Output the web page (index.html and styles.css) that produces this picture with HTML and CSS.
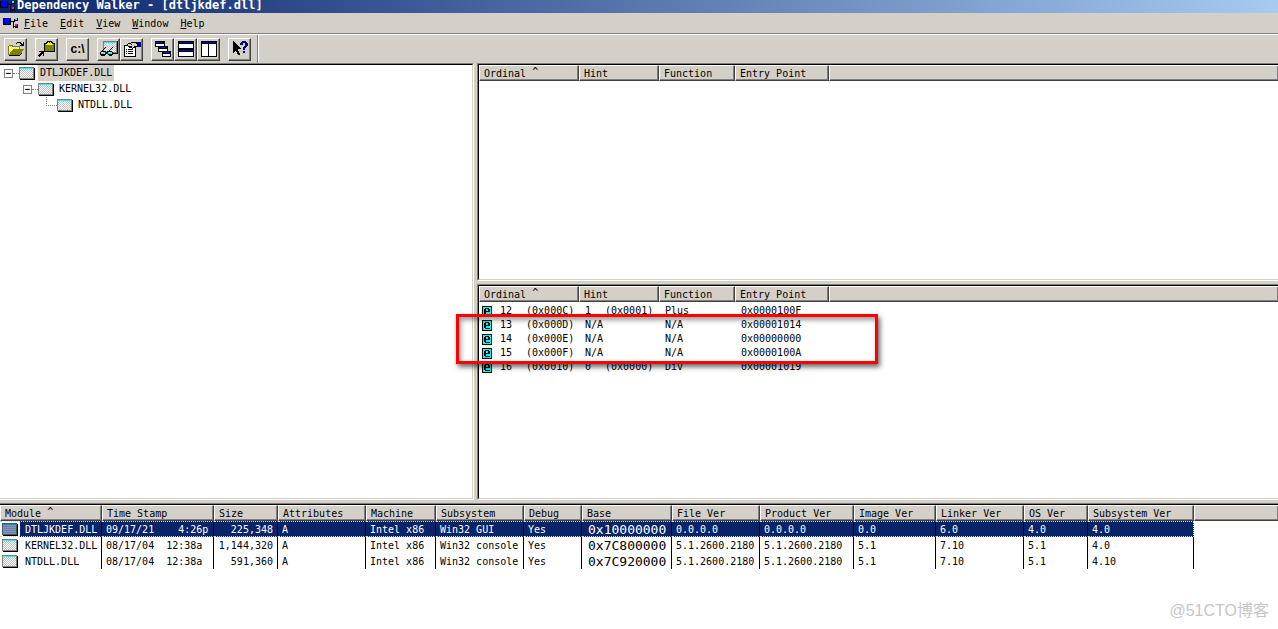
FILE: index.html
```html
<!DOCTYPE html>
<html lang="en">
<head>
<meta charset="utf-8">
<title>Dependency Walker - [dtljkdef.dll]</title>
<link rel="stylesheet" href="styles.css">
</head>
<body>
<svg class="defs" aria-hidden="true">
  <defs>
    <pattern id="check" width="2" height="2" patternUnits="userSpaceOnUse">
      <rect width="2" height="2" fill="#fff"/><path d="M0 0h1v1H0zM1 1h1v1H1z" fill="#c0c0c0"/>
    </pattern>
    <pattern id="yellow-check" width="2" height="2" patternUnits="userSpaceOnUse">
      <rect width="2" height="2" fill="#fff"/><path d="M0 0h1v1H0zM1 1h1v1H1z" fill="#ff0"/>
    </pattern>
    <symbol id="module" viewBox="0 0 16 13">
      <path d="M1 1h15v12H1z" fill="#000"/><path d="M0 0h15v12H0z" fill="#808080"/>
      <path d="M1 1h13v1H1z" fill="#0ff"/><path d="M1 2h13v9H1z" fill="url(#check)"/>
    </symbol>
    <symbol id="module-selected" viewBox="0 0 16 13">
      <path d="M1 1h15v12H1z" fill="#000"/><path d="M0 0h15v12H0z" fill="#455575"/>
      <path d="M1 1h13v1H1z" fill="#0594b4"/><path d="M1 2h13v9H1z" fill="#8494b4"/>
      <path d="M1 3h13v1H1zM1 5h13v1H1zM1 7h13v1H1zM1 9h13v1H1z" fill="#6f80a4"/>
    </symbol>
    <symbol id="app" viewBox="0 0 16 13">
      <path d="M0 1h8v7H0z" fill="#000"/><path d="M1 1h6v6H1z" fill="#00f"/>
      <path d="M8 4h4v1H8zM10 5h1v6h-1zM11 9h2v1h-2zM11 2h1v3h-1zM12 1h3v3h-3zM12 7h3v4h-3z" fill="#000"/>
      <path d="M12 1h2v2h-2z" fill="#0ff"/><path d="M12 7h2v2h-2z" fill="#f0f"/>
    </symbol>
    <symbol id="export" viewBox="0 0 10 11">
      <path d="M0 0h10v11H0z" fill="#000"/><path d="M1 1h8v9H1z" fill="#0ff"/>
      <path d="M3 2h4v1H3zM2 3h2v5H2zM6 3h2v3H6zM4 5h2v1H4zM3 8h5v1H3z" fill="#000"/>
    </symbol>
  </defs>
</svg>

<header class="titlebar"><svg class="app-icon"><use href="#app"/></svg><h1>Dependency Walker - [dtljkdef.dll]</h1></header>

<nav class="menubar" aria-label="Menu">
  <svg class="app-icon" aria-hidden="true"><use href="#app"/></svg>
  <button><u>F</u>ile</button><button><u>E</u>dit</button><button><u>V</u>iew</button><button><u>W</u>indow</button><button><u>H</u>elp</button>
</nav>

<div class="toolbar" role="toolbar">
  <div class="group">
    <button aria-label="Open"><svg viewBox="0 0 18 16"><path d="M2 4h4v1h7v4H2z" fill="#808000"/><path d="M2 4h4v1H2zM1 5h1v9H1z" fill="#808000"/><path d="M2 5h3v1h7v3H5v1H4v2H3v2H2z" fill="url(#yellow-check)"/><path d="M6 8h11v1h-1v1h-1v2h-1v1h-1v1H2v-1h1v-2h1v-1h1V9h1z" fill="#808000"/><path d="M2 14h11v1H2zM13 13h1v1h-1zM14 12h1v1h-1z"/><path d="M10 1h4v1h1v1h1V1h1v4h-4V4h1V3h-1V2h-3v1H9V2h1z"/></svg></button>
  </div>
  <div class="group">
    <button aria-label="View module"><svg viewBox="0 0 18 16"><path d="M6 2h2V1h1V0h5v1h1v1h2v9H6z"/><path d="M7 3h9v7H7z" fill="#808000"/><path d="M8 3h1V2h1V1h3v1h1v1h1v1H8z" fill="#ff0"/><path d="M11 1h1v1h-1z"/><path d="M1 10h5v5H5v-2H4v1H3v1H2v1H1v-1H0v-1h1v-1h1v-1h1v-1H1z"/></svg></button>
  </div>
  <div class="group"><button class="path-button">c:\</button></div>
  <div class="group">
    <button aria-label="View functions"><svg viewBox="0 0 18 16"><path d="M4 0h14v13H4z"/><path d="M3 0h14v12H3z" fill="#808080"/><path d="M4 1h12v1H4z" fill="#0ff"/><path d="M4 2h12v9H4z" fill="url(#check)"/><path d="M5 6h1v1H5zM4 7h1v1H4zM3 8h1v1H3zM2 9h1v1H2zM12 6h1v1h-1zM11 7h1v1h-1zM10 8h1v1h-1zM9 9h1v1H9zM1 10h5v1h1v-1h5v1h1v3h-1v1H9v-1H8v-2H6v2H5v1H1v-1H0v-3h1z"/><path d="M1 11h4v2H1zM8 11h4v2H8z" fill="#0ff"/><path d="M2 11h1v1H2zM9 11h1v1H9zM4 12h1v1H4zM11 12h1v1h-1z" fill="#fff"/></svg></button><button aria-label="Properties"><svg viewBox="0 0 18 16"><path d="M1 4h12v12H1z"/><path d="M2 5h10v10H2z" fill="#fff"/><path d="M3 8h1v1H3zM5 8h5v1H5zM3 10h1v1H3zM5 10h5v1H5zM3 12h1v1H3zM5 12h5v1H5z"/><path d="M5 2h3V1h6v1h1v4h-3v1h-2v1H9V7H6V6H5V5H4V3h1z"/><path d="M5 3h3V2h5v1h1v2h-3v1h-1v1H9V5H5z" fill="#d4d0c8"/><path d="M8 3h1v1H8zM6 5h3v1H6z"/><path d="M14 1h4v5h-4z" fill="#000080"/></svg></button>
  </div>
  <div class="group">
    <button aria-label="Cascade"><svg viewBox="0 0 18 16"><path d="M1 0h10v6H1zM4 5h10v6H4zM8 10h9v6H8z"/><path d="M2 3h8v2H2zM5 8h8v2H5zM9 13h7v2H9z" fill="#fff"/><path d="M2 1h6v1H2zM5 6h6v1H5zM9 11h6v1H9z" fill="#00f"/></svg></button><button aria-label="Tile horizontally"><svg viewBox="0 0 18 16"><path d="M1 0h16v16H1z"/><path d="M2 3h14v4H2zM2 11h14v4H2z" fill="#fff"/><path d="M2 1h14v1H2zM2 9h14v1H2z" fill="#00c"/></svg></button><button aria-label="Tile vertically"><svg viewBox="0 0 18 16"><path d="M1 0h16v16H1z"/><path d="M2 3h6v12H2zM9 3h7v12H9z" fill="#fff"/><path d="M2 1h6v1H2zM9 1h7v1H9z" fill="#00c"/></svg></button>
  </div>
  <div class="group">
    <button aria-label="Help"><svg viewBox="0 0 18 16"><path d="M2 0h1v1h1v1h1v1h1v1h1v1h1v1h1v1h1v1H7v2h1v2h1v2H7v-1H6v-2H5v-1H4v1H3v1H2z"/><path d="M9 2h1V1h1V0h4v1h1v1h1v3h-1v1h-1v1h-1v2h-2V6h1V5h1V2h-2v2H9zM12 10h2v2h-2z" fill="#000080"/></svg></button>
  </div>
</div>

<main class="workspace">
  <section class="pane tree-pane" aria-label="Module tree">
    <ul class="tree">
      <li><button class="toggle" aria-label="Collapse">−</button><i class="link"></i><svg class="module"><use href="#module"/></svg><span class="label selected">DTLJKDEF.DLL</span></li>
      <li class="level-2"><button class="toggle" aria-label="Collapse">−</button><i class="link"></i><svg class="module"><use href="#module"/></svg><span class="label">KERNEL32.DLL</span></li>
      <li class="level-3"><i class="elbow"></i><svg class="module"><use href="#module"/></svg><span class="label">NTDLL.DLL</span></li>
    </ul>
  </section>
  <div class="function-panes">
    <section class="pane imports" aria-label="Imports"><div class="inner">
      <table class="functions">
        <colgroup><col class="w100"><col class="w80"><col class="w76"><col class="w94"><col></colgroup>
        <thead><tr><th>Ordinal <sup>^</sup></th><th>Hint</th><th>Function</th><th>Entry Point</th><th></th></tr></thead>
      </table>
    </div></section>
    <section class="pane exports" aria-label="Exports"><div class="inner">
      <table class="functions">
        <colgroup><col class="w100"><col class="w80"><col class="w76"><col class="w94"><col></colgroup>
        <thead><tr><th>Ordinal <sup>^</sup></th><th>Hint</th><th>Function</th><th>Entry Point</th><th></th></tr></thead>
        <tbody>
          <tr><td><div class="ordinal"><svg><use href="#export"/></svg><span>12</span><span>(0x000C)</span></div></td><td><div class="hint"><span>1</span><span>(0x0001)</span></div></td><td>Plus</td><td>0x0000100F</td><td></td></tr>
          <tr><td><div class="ordinal"><svg><use href="#export"/></svg><span>13</span><span>(0x000D)</span></div></td><td>N/A</td><td>N/A</td><td>0x00001014</td><td></td></tr>
          <tr><td><div class="ordinal"><svg><use href="#export"/></svg><span>14</span><span>(0x000E)</span></div></td><td>N/A</td><td>N/A</td><td>0x00000000</td><td></td></tr>
          <tr><td><div class="ordinal"><svg><use href="#export"/></svg><span>15</span><span>(0x000F)</span></div></td><td>N/A</td><td>N/A</td><td>0x0000100A</td><td></td></tr>
          <tr><td><div class="ordinal"><svg><use href="#export"/></svg><span>16</span><span>(0x0010)</span></div></td><td><div class="hint"><span>0</span><span>(0x0000)</span></div></td><td>Div</td><td>0x00001019</td><td></td></tr>
        </tbody>
      </table>
    </div><div class="callout"></div></section>
  </div>
</main>

<section class="modules-pane" aria-label="Modules">
  <table class="modules">
    <colgroup><col class="w102"><col class="w112"><col class="w64"><col class="w88"><col class="w70"><col class="w88"><col class="w58"><col class="w90"><col class="w88"><col class="w94"><col class="w82"><col class="w88"><col class="w64"><col class="w106"><col></colgroup>
    <thead><tr><th>Module <sup>^</sup></th><th>Time Stamp</th><th>Size</th><th>Attributes</th><th>Machine</th><th>Subsystem</th><th>Debug</th><th>Base</th><th>File Ver</th><th>Product Ver</th><th>Image Ver</th><th>Linker Ver</th><th>OS Ver</th><th>Subsystem Ver</th><th></th></tr></thead>
    <tbody>
      <tr class="current"><td><div class="name"><svg class="module"><use href="#module-selected"/></svg><span>DTLJKDEF.DLL</span></div></td><td>09/17/21    4:26p</td><td>225,348</td><td>A</td><td>Intel x86</td><td>Win32 GUI</td><td>Yes</td><td>0x10000000</td><td>0.0.0.0</td><td>0.0.0.0</td><td>0.0</td><td>6.0</td><td>4.0</td><td>4.0</td><td></td></tr>
      <tr><td><div class="name"><svg class="module"><use href="#module"/></svg><span>KERNEL32.DLL</span></div></td><td>08/17/04  12:38a</td><td>1,144,320</td><td>A</td><td>Intel x86</td><td>Win32 console</td><td>Yes</td><td>0x7C800000</td><td>5.1.2600.2180</td><td>5.1.2600.2180</td><td>5.1</td><td>7.10</td><td>5.1</td><td>4.0</td><td></td></tr>
      <tr><td><div class="name"><svg class="module"><use href="#module"/></svg><span>NTDLL.DLL</span></div></td><td>08/17/04  12:38a</td><td>591,360</td><td>A</td><td>Intel x86</td><td>Win32 console</td><td>Yes</td><td>0x7C920000</td><td>5.1.2600.2180</td><td>5.1.2600.2180</td><td>5.1</td><td>7.10</td><td>5.1</td><td>4.10</td><td></td></tr>
    </tbody>
  </table>
</section>
<div class="watermark">@51CTO博客</div>
</body>
</html>
```
FILE: styles.css
```css
* { box-sizing: border-box; }
body {
  margin: 0;
  height: 100vh;
  display: flex;
  flex-direction: column;
  overflow: hidden;
  background: #d4d0c8;
  color: #000;
  font: 10px/16px "DejaVu Sans Mono", "Liberation Mono", monospace;
}
button { font: inherit; color: inherit; padding: 0; margin: 0; border: 0; background: none; }
svg { display: block; shape-rendering: crispEdges; flex: none; }
.defs { position: absolute; width: 0; height: 0; }
.app-icon { width: 16px; height: 13px; }

.titlebar {
  flex: none;
  height: 13px;
  display: flex;
  gap: 1px;
  align-items: flex-start;
  background: linear-gradient(90deg, #0a246a, #a6caf0);
  color: #fff;
}
.titlebar h1 { margin: 0; font-size: 12px; line-height: 10px; font-weight: bold; white-space: pre; }

.menubar {
  flex: none;
  height: 21px;
  display: flex;
  align-items: center;
  gap: 12px;
  padding: 1px 0 0 3px;
  border-bottom: 1px solid #808080;
}
.menubar .app-icon { margin-right: -7px; }

.toolbar {
  flex: none;
  height: 29px;
  display: flex;
  align-items: center;
  align-self: flex-start;
  gap: 8px;
  padding: 0 6px 0 4px;
  border-top: 1px solid #fff;
  border-right: 1px solid #808080;
  box-shadow: 1px 0 #fff;
}
.toolbar::before { content: ""; position: absolute; left: 0; right: 0; height: 1px; top: 34px; background: #fff; }
.group { display: flex; }
.group button {
  width: 23px;
  height: 23px;
  display: flex;
  align-items: center;
  justify-content: center;
  border: 1px solid;
  border-color: #fff #404040 #404040 #fff;
  box-shadow: inset -1px -1px #808080;
}
.group svg { width: 18px; height: 16px; }
.group .path-button { font: bold 12px/16px "Liberation Sans", sans-serif; }

.workspace { flex: 437 1 0; min-height: 0; display: grid; grid-template-columns: 474fr 801fr; gap: 3px; }
.pane {
  position: relative;
  min-width: 0;
  background: #fff;
  border: 1px solid;
  border-color: #808080 #fff #fff #808080;
}
.inner, .tree {
  height: 100%;
  border: 1px solid;
  border-color: #000 #d4d0c8 #d4d0c8 #000;
}
.tree-pane { border-left: 0; }
.tree { margin: 0; padding: 0; list-style: none; border-left: 0; }
.tree li { height: 16px; display: flex; align-items: center; padding-left: 4px; }
.tree .level-2 { padding-left: 23px; }
.tree .level-3 { padding-left: 46px; }
.module { width: 16px; height: 13px; }
.toggle { width: 9px; height: 9px; border: 1px solid #808080; font-size: 9px; line-height: 7px; font-weight: bold; }
.link { width: 6px; border-top: 1px dotted #808080; }
.elbow { width: 11px; height: 9px; align-self: flex-start; border: 1px dotted #808080; border-width: 0 0 1px 1px; }
.label { margin-left: 3px; padding: 0 2px; line-height: 16px; }
.selected { background: #d4d0c8; }

.function-panes { min-width: 0; display: grid; grid-template-rows: 218fr 216fr; gap: 3px; }
.function-panes .pane { border-right: 0; }
.function-panes .inner { border-right: 0; }

table { width: 100%; table-layout: fixed; border-collapse: separate; border-spacing: 0; }
th, td { padding: 0; text-align: left; font-weight: normal; white-space: pre; }
th {
  height: 16px;
  padding-left: 5px;
  line-height: 13px;
  background: #d4d0c8;
  border: 1px solid;
  border-color: #fff #404040 #404040 #fff;
  box-shadow: inset -1px -1px #808080;
}
th:last-child { border-right: 0; }
sup { font-size: 10px; line-height: 1px; vertical-align: 2px; }
.functions th { padding-left: 4px; }
.functions tbody::before { content: ""; display: block; height: 2px; }
.functions td { height: 14px; line-height: 14px; padding-left: 6px; }
.functions td:first-child { padding-left: 3px; }
.ordinal { display: flex; align-items: center; gap: 14px; }
.ordinal svg { width: 10px; height: 11px; margin-right: -6px; }
.hint { display: flex; gap: 14px; }
.callout {
  position: absolute;
  left: -22px;
  top: 29px;
  width: 422px;
  height: 50px;
  border: 3px solid #f00;
  box-shadow: 2px 3px 5px rgba(0,0,0,.6), inset 2px 3px 5px rgba(0,0,0,.4);
}

.modules-pane { flex: 124 1 0; min-height: 0; margin-top: 3px; background: #fff; border-top: 1px solid #808080; box-shadow: inset 0 1px #000; padding-top: 1px; overflow: hidden; }
.modules th { padding-left: 4px; }
.modules td { height: 16px; line-height: 15px; padding-left: 4px; border-right: 1px solid #000; }
.modules td:first-child { padding-left: 2px; }
.modules td:last-child { border-right: 0; }
.modules td:nth-child(3) { text-align: right; padding-right: 4px; }
.modules td:nth-child(8) { font-size: 13px; padding-left: 6px; }
.name { display: flex; align-items: center; gap: 7px; }
.current td:not(:last-child) {
  background: #0a246a;
  color: #fff;
  border-top: 1px dotted #f5db95;
  border-bottom: 1px dotted #f5db95;
  line-height: 13px;
}
.current td:nth-child(14) { border-right: 1px dotted #fff; }
.current td:first-child { background: linear-gradient(90deg, #fff 20px, #0a246a 20px); }

.w58 { width: 58px; } .w64 { width: 64px; } .w70 { width: 70px; } .w76 { width: 76px; }
.w80 { width: 80px; } .w82 { width: 82px; } .w88 { width: 88px; } .w90 { width: 90px; }
.w94 { width: 94px; } .w100 { width: 100px; } .w102 { width: 102px; } .w106 { width: 106px; }
.w112 { width: 112px; }

.watermark {
  position: absolute;
  right: 9px;
  bottom: 6px;
  color: #c6c6c6;
  font: 16px/24px "Liberation Sans", "Noto Sans CJK SC", sans-serif;
}
```
